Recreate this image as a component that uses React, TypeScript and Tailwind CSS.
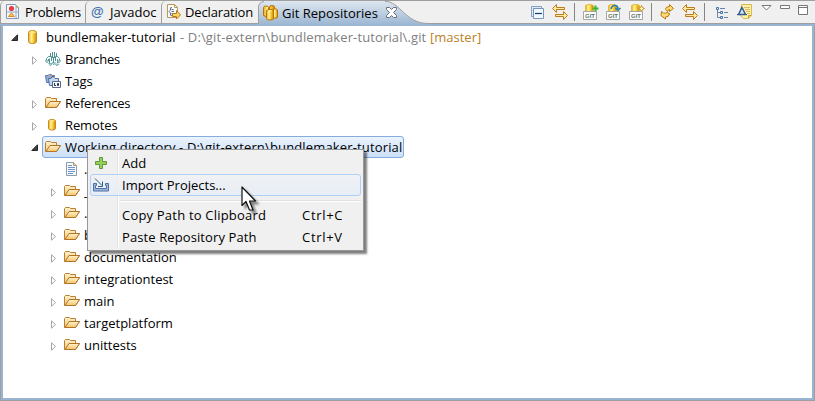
import React from "react";

type P = { className?: string };

function Svg({ w, h, className = "", children }: { w: number; h: number; className?: string; children: React.ReactNode }) {
  return (
    <svg width={w} height={h} viewBox={`0 0 ${w} ${h}`} className={`block shrink-0 ${className}`} fill="none">
      {children}
    </svg>
  );
}

function Defs() {
  return (
    <svg width="0" height="0" className="absolute">
      <defs>
        <linearGradient id="gold" x1="0" x2="1" y1="0" y2="0">
          <stop offset="0" stopColor="#e8a817" />
          <stop offset="0.35" stopColor="#fff3a0" />
          <stop offset="0.6" stopColor="#f8cf3c" />
          <stop offset="1" stopColor="#d08a08" />
        </linearGradient>
        <linearGradient id="fold" x1="0" x2="0" y1="0" y2="1">
          <stop offset="0" stopColor="#fff3cf" />
          <stop offset="1" stopColor="#f5c469" />
        </linearGradient>
        <linearGradient id="tab" x1="0" x2="0" y1="0" y2="1">
          <stop offset="0" stopColor="#dfe7f1" />
          <stop offset="1" stopColor="#99b4d1" />
        </linearGradient>
      </defs>
    </svg>
  );
}

function Repo({ className }: P) {
  return (
    <Svg w={16} h={16} className={className}>
      <path d="M1.5 3.5Q1.5 1.5 5.5 1.5T9.5 3.5V12.5Q9.5 14.5 5.5 14.5T1.5 12.5Z" fill="url(#gold)" stroke="#c98b16" />
      <path d="M2 3.5Q5.5 5.5 9 3.5Q8.500 2 5.5 2T2 3.500Z" fill="#fbe58c" />
    </Svg>
  );
}

function Remote({ className }: P) {
  return (
    <Svg w={16} h={16} className={className}>
      <path d="M3.500 4Q3.500 2.500 7 2.500T10.500 4V11.500Q10.500 13 7 13T3.500 11.500Z" fill="url(#gold)" stroke="#c98b16" />
      <path d="M4 4Q7 5.500 10 4Q9 3 7 3T4 4Z" fill="#fbe58c" />
    </Svg>
  );
}

function Folder({ className }: P) {
  return (
    <Svg w={16} h={16} className={className}>
      <path d="M.5 12.500V3.500L1.500 2.500H5.500L6.500 3.500H11.500V6.500H15.500L11.500 12.500Z" fill="url(#fold)" stroke="#b98035" />
      <path d="M1 12.500L5 6.500H15.500L11.500 12.500Z" fill="url(#fold)" stroke="#b07428" />
    </Svg>
  );
}

function Branches({ className }: P) {
  return (
    <Svg w={16} h={16} className={className}>
      <path d="M5.500 2V5M7.500 1V7M9.500 1V7M11.500 2V5M1.500 9V7.500L3.500 5.500H6.500V10M3.500 10V8M4.500 7.500V13M14.500 9V7.500L12.500 5.500H10.500V10M12.500 8V12M8.500 6V13" stroke="#4f9292" />
      <path d="M0 9.500H4L2 12ZM3.500 12.500H7L5.500 15ZM7 11.500H10.500L8.500 14ZM12 9.500H16L14 12ZM10 13H14L12 15Z" fill="#a9dedb" stroke="#5d9c9b" strokeWidth=".6" />
    </Svg>
  );
}

function Tags({ className }: P) {
  return (
    <Svg w={16} h={16} className={className}>
      <path d="M.5 2.500H3L4.500 1.500H6L7.500 2.500H9.500V9.500H1.500Z" fill="#8eadd9" stroke="#6079a8" />
      <path d="M3.500 5.500H6L7 3.500H9L10 5.500H13.500V12.500H4.500Z" fill="#c4d8f2" stroke="#506ca0" />
      <path d="M3.500 2.500H6.500M7 4.500H10" stroke="#d19a8a" />
      <path d="M7.500 8.500H15.500V14.500H7.500Z" fill="#f5f8ff" stroke="#5d6889" />
      <path d="M9.500 10V12.500H11M12.500 10.500H13.500V12.500H12.500Z" stroke="#29334d" />
    </Svg>
  );
}

function FileIcon({ className }: P) {
  return (
    <Svg w={16} h={16} className={className}>
      <path d="M2.500 1.500H9.500L12.500 4.500V14.500H2.500Z" fill="#f5faff" stroke="#8d9baa" />
      <path d="M9.500 1.500V4.500H12.500" fill="#e5d09b" stroke="#b69b65" />
      <path d="M4 4.500H8M4 6.500H11M4 8.500H11M4 10.500H11M4 12.500H9" stroke="#7293c5" />
    </Svg>
  );
}

function Problems() {
  return (
    <Svg w={15} h={16}>
      <path d="M.5.5H9.500L12.500 3.500V14.500H.5Z" fill="#f5f8fd" stroke="#8496b8" />
      <path d="M1 8H12.500M10 1V14" stroke="#8fa8cb" />
      <path d="M10.500 1V3.500H12.500" stroke="#c8b27c" />
      <circle cx="5.500" cy="4.500" r="2.600" fill="#df3e43" />
      <path d="M5.500 8.800L8.500 12.500H2.500Z" fill="#f9c348" stroke="#d9892a" />
    </Svg>
  );
}

function DeclarationIcon() {
  return (
    <Svg w={15} h={16}>
      <path d="M.5.5H7.500L10.500 3.500V13.500H.5Z" fill="#fffdf3" stroke="#b59a5c" />
      <path d="M7.500.5V3.500H10.500" stroke="#b59a5c" />
      <path d="M5 3.500Q2.500 3 3.500 6L2 7.500L3.500 9Q2.500 12 5 11.500M4.500 5.500H6.500M4.500 7.500H7M4.500 9.500H6" stroke="#526f9e" />
      <path d="M5.500 9.500H9.500V6.500L13.500 11L9.500 15V12.500H5.500Z" fill="#fbd66d" stroke="#b87914" />
    </Svg>
  );
}

function Repos() {
  return (
    <Svg w={16} h={16}>
      <path d="M.5 2.500Q.5 1 3 1T5.500 2.500V10.500Q3 12.500.5 10.500ZM6.500 2Q6.500.5 9 .5T11.500 2V9H6.500Z" fill="url(#gold)" stroke="#bd7200" />
      <path d="M10.500 4Q13 3 14.500 5V12.500Q12 14 10 12.500Z" fill="url(#gold)" stroke="#bd7200" />
      <path d="M3.500 6Q3.500 4.500 7 4.500T10.500 6V13.500Q10.500 15 7 15T3.500 13.500Z" fill="url(#gold)" stroke="#bd7200" />
      <path d="M4.500 6Q7 7 9.500 6Q8 5 7 5Z" fill="#fff0a8" />
    </Svg>
  );
}

function CloseIcon() {
  return (
    <Svg w={11} h={11}>
      <path d="M.5.5H3.500L5.500 2.500L7.500.5H10.500V2.500L7.500 5.500L10.500 8.500V10.500H7.500L5.500 8.500L3.500 10.500H.5V8.500L3.500 5.500L.5 2.500Z" fill="#fff" stroke="#69707a" />
    </Svg>
  );
}

function Collapse() {
  return (
    <Svg w={13} h={13}>
      <path d="M.5 10.500V.5H10.500V2.500H2.500V10.500Z" fill="#dce9f7" stroke="#83a3c2" />
      <path d="M2.500 2.500H12.500V12.500H2.500Z" fill="#f1f8ff" stroke="#7896b8" />
      <path d="M4 7.500H11" stroke="#173c67" strokeWidth="1.200" />
    </Svg>
  );
}

function Link() {
  return (
    <Svg w={16} h={16}>
      <path d="M.5 4.500L4.500.5V3.500H12.500V5.500H4.500V8.500Z" fill="#ffe9a0" stroke="#ba7d1e" />
      <path d="M15.500 11.500L11.500 7.500V10.500H3.500V12.500H11.500V15.500Z" fill="#ffe9a0" stroke="#ba7d1e" />
    </Svg>
  );
}

function GitIcon({ kind }: { kind: "add" | "clone" | "new" }) {
  return (
    <Svg w={17} h={16}>
      <path d="M2.500 9V2Q2.500.5 6.500.5T10.500 2V9Z" fill="url(#gold)" stroke="#e4b936" />
      <path d="M.5 7.500H13.500V15.500H.5Z" fill="#fdfdfd" stroke="#a5a5a5" />
      <text x="2" y="14" className="font-['Liberation_Sans'] text-[6px] font-bold" fill="#60766c" textLength="10">GIT</text>
      {kind === "add" && <path d="M9.500 4.500H15.500M12.500 1.500V7.500" stroke="#3db53c" strokeWidth="2" />}
      {kind === "clone" && <path d="M5 5Q6 .8 9.500 1.500Q12 2 12 5M9.500 4L12 6.500L14.500 4" stroke="#297fa7" strokeWidth="1.500" />}
      {kind === "new" && <path d="M12.500 1.500L13.500 3.500L15.500 4.500L13.500 5.500L12.500 7.500L11.500 5.500L9.500 4.500L11.500 3.500Z" fill="#fff4b0" stroke="#c1922c" />}
    </Svg>
  );
}

function Refresh() {
  return (
    <Svg w={15} h={16}>
      <path d="M5.500 5.500Q5.500 2.500 9.500 2.500V.5L13.500 4.500L9.500 7.500V5.500Q8 5.500 7.500 7.500Z" fill="#ffdc73" stroke="#b77713" />
      <path d="M9.500 9.500Q9.500 13 5.500 13V15L1 11.500L1.500 7.500L3.500 9Q6 9.500 7 8.500Z" fill="#ffdc73" stroke="#b77713" />
    </Svg>
  );
}

function Hierarchy() {
  return (
    <Svg w={12} h={12}>
      <path d="M1.500 2V10.500H5M1.500 5.500H5" stroke="#6f86ab" />
      <path d="M.5.5H2.500V2.500H.5ZM4.500 4.500H6.500V6.500H4.500ZM4.500 9.500H6.500V11.500H4.500Z" fill="#dbeafb" stroke="#4974b0" />
      <path d="M4 1.500H9M8 5.500H12M8 10.500H12" stroke="#6583ab" />
    </Svg>
  );
}

function NoteIcon() {
  return (
    <Svg w={16} h={16}>
      <path d="M4.500.5H14.500V11.500L11.500 14.500H6.500L3.500 11.500Z" fill="#fff2a8" stroke="#d7b953" />
      <path d="M7 3.500H13M8 5.500H13M9 7.500H13M10 9.500H13" stroke="#dfb962" />
      <path d="M11.500 14V11.500H14" fill="#f5d65e" stroke="#c7a12d" />
      <path d="M5 3.500L8.500 10.500H1.500Z" fill="#d5e8fb" stroke="#315b94" strokeWidth="1.500" />
      <path d="M0 10.500H4M6 10.500H10" stroke="#315b94" />
    </Svg>
  );
}

function Arrow({ open }: { open?: boolean }) {
  return open ? (
    <Svg w={8} h={8}>
      <path d="M6.500.8V6.500H.8Z" fill="#404040" stroke="#262626" />
    </Svg>
  ) : (
    <Svg w={8} h={9}>
      <path d="M1.500.8V8.200L5.500 4.500Z" fill="#fff" stroke="#a5a5a5" />
    </Svg>
  );
}

function AddIcon() {
  return (
    <Svg w={12} h={12}>
      <path d="M4.500.5H7.500V4.500H11.500V7.500H7.500V11.500H4.500V7.500H.5V4.500H4.500Z" fill="#9ad052" stroke="#5a9a43" />
    </Svg>
  );
}

function ImportIcon() {
  return (
    <Svg w={16} h={14}>
      <path d="M.5 5.500H3.500V7.500H2.500V10.500H13.500V7.500H12.500V5.500H15.500V13H.5Z" fill="#9db8dc" stroke="#4f70a4" />
      <path d="M2 .5L9 7.500M9.500 3.500V8.500H5" stroke="#286383" />
    </Svg>
  );
}

function Cursor() {
  return (
    <svg width="26" height="30" viewBox="0 0 26 30" className="pointer-events-none absolute left-[241px] top-[186px] drop-shadow-[3px_3px_1px_rgba(0,0,0,0.45)]">
      <path d="M1 1V19.500L5 15.500L8.500 24H12L8.500 15H14.500Z" fill="#fff" stroke="#111" strokeWidth="1.200" strokeLinejoin="round" />
    </svg>
  );
}

function TreeRow({ level, text, icon, open, leaf, track = "" }: { level: 1 | 2; text: string; icon: React.ReactNode; open?: boolean; leaf?: boolean; track?: string }) {
  const selected = text.startsWith("Working");
  return (
    <div className={`flex h-[22px] items-center ${level === 1 ? "pl-[28px]" : "pl-[47px]"}`}>
      <div className="flex w-[11px] pt-[2px]">{!leaf && <Arrow open={open} />}</div>
      <div
        className={`flex h-[22px] items-center border pl-[2px] ${
          selected ? "rounded-[3px] border-[#84acdd] bg-linear-to-b from-[#ebf3fd] to-[#cbe0f9]" : "border-transparent"
        }`}
      >
        {icon}
        <span className={`ml-1 whitespace-pre pr-px ${track}`}>{text}</span>
      </div>
    </div>
  );
}

function MenuItem({ icon, text, keys, hover, track = "" }: { icon?: React.ReactNode; text: string; keys?: string; hover?: boolean; track?: string }) {
  return (
    <div
      className={`flex h-[22px] items-center rounded-[3px] border ${
        hover ? "border-[#aecff7] bg-linear-to-b from-[#f0f2f5]/80 to-[#e5edf7]/80" : "border-transparent"
      }`}
    >
      <div className="flex w-[31px] pl-[2px]">{icon}</div>
      <span className={`w-[180px] whitespace-pre ${track}`}>{text}</span>
      <span className="tracking-[0.7px]">{keys}</span>
    </div>
  );
}

function ContextMenu() {
  return (
    <div className="absolute left-[87px] top-[149px] h-[102px] w-[277px] border border-[#979797] bg-[#f0f0f0] p-[2px] shadow-[3px_3px_2px_rgba(0,0,0,0.5)]">
      <div className="absolute bottom-[2px] left-[29px] top-[2px] w-[2px] border-l border-[#e2e3e3] bg-white" />
      <div className="relative">
        <MenuItem icon={<div className="pl-[2px]"><AddIcon /></div>} text="Add" />
        <MenuItem icon={<ImportIcon />} text="Import Projects..." hover />
        <div className="ml-[30px] mt-[4px] mb-[2px] h-[2px] border-t border-[#e0e0e0] bg-white" />
        <MenuItem text="Copy Path to Clipboard" keys="Ctrl+C" track="tracking-[0.2px]" />
        <MenuItem text="Paste Repository Path" keys="Ctrl+V" track="tracking-[0.1px]" />
      </div>
    </div>
  );
}

function Tab({ icon, text, width, track = "" }: { icon: React.ReactNode; text: string; width: string; track?: string }) {
  return (
    <div className={`flex h-[23px] items-center gap-[4px] rounded-tl-[5px] border-b border-l border-[#a09f9f] pl-[5px] ${width}`}>
      <div className="flex w-[15px] shrink-0">{icon}</div>
      <span className={`whitespace-pre ${track}`}>{text}</span>
    </div>
  );
}

function Divider({ className }: P) {
  return <div className={`h-[18px] w-px bg-[#858585] ${className}`} />;
}

function TabBar() {
  return (
    <div className="flex h-[26px] flex-col border-t border-[#a09f9f]">
      <div className="flex h-[23px]">
        <Tab icon={<Problems />} text="Problems" width="w-[85px]" track="tracking-[-0.2px]" />
        <Tab icon={<span className="font-['Liberation_Sans'] text-[13px] font-bold text-[#3d71ac]">@</span>} text="Javadoc" width="w-[76px]" />
        <Tab icon={<DeclarationIcon />} text="Declaration" width="w-[97px]" track="ml-[-1px] tracking-[-0.15px]" />
        <div className="relative flex h-[23px] w-[172px]">
          <Svg w={172} h={25} className="absolute left-0 top-0">
            <path d="M0 25V6Q1 .5 6 0H127C142 0 147 22.500 170 22.500H172V25Z" fill="url(#tab)" />
            <path d="M.5 23V6Q1 1 6 .5M127 .5C142 0 147 22.500 170 22.500H172" stroke="#a09f9f" />
          </Svg>
          <div className="relative flex items-center pl-[5px]">
            <Repos />
            <span className="ml-[3px] w-[104px] whitespace-pre">Git Repositories</span>
            <CloseIcon />
          </div>
        </div>
        <div className="flex flex-1 items-center rounded-tr-[6px] border-b border-[#a09f9f] pl-[101px]">
          <Collapse />
          <div className="ml-[8px]"><Link /></div>
          <Divider className="ml-[6px]" />
          <div className="ml-[8px] flex gap-[6px]">
            <GitIcon kind="add" />
            <GitIcon kind="clone" />
            <GitIcon kind="new" />
          </div>
          <Divider className="ml-[5px]" />
          <div className="ml-[8px]"><Refresh /></div>
          <div className="ml-[7px]"><Link /></div>
          <Divider className="ml-[6px]" />
          <div className="ml-[11px] pt-px"><Hierarchy /></div>
          <div className="ml-[9px]"><NoteIcon /></div>
          <div className="ml-[8px] flex gap-[8px]">
            <Svg w={11} h={16}><path d="M1 1.500H10L5.500 6Z" fill="#fff" stroke="#777" /></Svg>
            <Svg w={10} h={16}><path d="M.5 1.500H9.500V4.500H.5Z" fill="#fff" stroke="#777" /></Svg>
            <Svg w={10} h={16}><path d="M.5 1.500H9.500V10.500H.5ZM.5 3.500H9.500" fill="#fff" stroke="#777" /></Svg>
          </div>
        </div>
      </div>
      <div className="h-[2px] bg-[#99b4d1]" />
    </div>
  );
}

const folders: string[] = ["_", ".", "b", "documentation", "integrationtest", "main", "targetplatform", "unittests"];

export default function App() {
  return (
    <div className="relative h-[401px] w-[815px] overflow-hidden bg-[#f0f0f0] font-['Open_Sans','Noto_Sans',sans-serif] text-[13px] leading-[20px] text-black">
      <Defs />
      <TabBar />
      <div className="h-[375px] border-b border-r border-l border-[#a09f9f]">
        <div className="h-[374px] border-x-2 border-b-2 border-[#99b4d1] bg-white">
          <div className="flex h-[22px] items-center pl-[8px]">
            <div className="flex w-[16px] pt-[2px]"><Arrow open /></div>
            <Repo />
            <span className="ml-[3px] w-[134px]">bundlemaker-tutorial</span>
            <span className="w-[250px] whitespace-pre tracking-[0.13px] text-[#808080]">- D:\git-extern\bundlemaker-tutorial\.git</span>
            <span className="text-[#b9822a]">[master]</span>
          </div>
          <TreeRow level={1} text="Branches" icon={<Branches />} track="tracking-[-0.2px]" />
          <TreeRow level={1} text="Tags" icon={<Tags />} leaf />
          <TreeRow level={1} text="References" icon={<Folder />} track="tracking-[-0.2px]" />
          <TreeRow level={1} text="Remotes" icon={<Remote />} track="tracking-[-0.1px]" />
          <TreeRow level={1} text="Working directory - D:\git-extern\bundlemaker-tutorial" icon={<Folder />} open track="tracking-[0.15px]" />
          <TreeRow level={2} text="." icon={<FileIcon />} leaf />
          {folders.map((f) => (
            <TreeRow key={f} level={2} text={f} icon={<Folder />} />
          ))}
        </div>
      </div>
      <ContextMenu />
      <Cursor />
    </div>
  );
}
